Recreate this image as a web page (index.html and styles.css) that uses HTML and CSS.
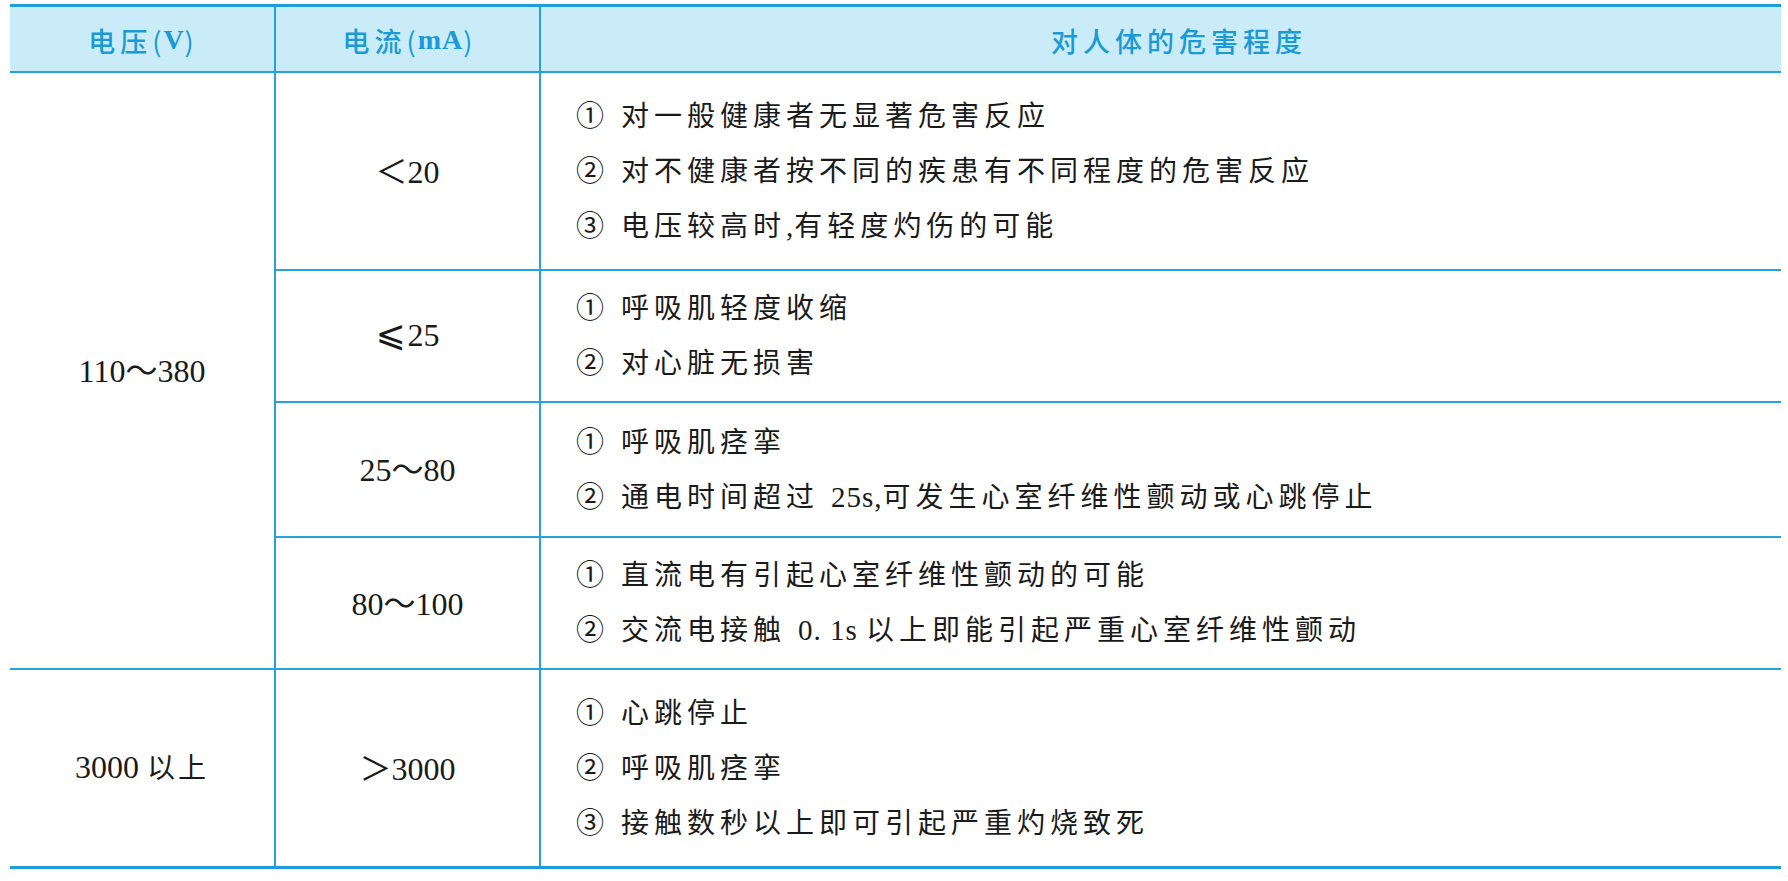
FILE: index.html
```html
<!DOCTYPE html>
<html lang="zh-CN">
<head>
<meta charset="utf-8">
<title>电流对人体的危害程度</title>
<link rel="stylesheet" href="styles.css">
</head>
<body>
<div class="sheet">
  <div class="grid">
    <div class="hd">电压<span class="paren">(</span><b class="lat">V</b><span class="paren">)</span></div>
    <div class="hd">电流<span class="paren">(</span><b class="lat">mA</b><span class="paren">)</span></div>
    <div class="hd">对人体的危害程度</div>

    <div class="cell num volt"><span>110～380</span></div>

    <div class="cell num"><span>＜20</span></div>
    <div class="cell desc">
      <p>① 对一般健康者无显著危害反应</p>
      <p>② 对不健康者按不同的疾患有不同程度的危害反应</p>
      <p>③ 电压较高时<span class="w">,</span>有轻度灼伤的可能</p>
    </div>

    <div class="cell num"><span><span class="le">⩽</span>25</span></div>
    <div class="cell desc">
      <p>① 呼吸肌轻度收缩</p>
      <p>② 对心脏无损害</p>
    </div>

    <div class="cell num"><span>25～80</span></div>
    <div class="cell desc">
      <p>① 呼吸肌痉挛</p>
      <p>② 通电时间超过 <span class="w">25s,</span>可发生心室纤维性颤动或心跳停止</p>
    </div>

    <div class="cell num"><span>80～100</span></div>
    <div class="cell desc">
      <p>① 直流电有引起心室纤维性颤动的可能</p>
      <p>② 交流电接触 <span class="w">0. 1s </span>以上即能引起严重心室纤维性颤动</p>
    </div>

    <div class="cell num"><span>3000 <span class="cjk">以上</span></span></div>
    <div class="cell num"><span>＞3000</span></div>
    <div class="cell desc">
      <p>① 心跳停止</p>
      <p>② 呼吸肌痉挛</p>
      <p>③ 接触数秒以上即可引起严重灼烧致死</p>
    </div>
  </div>
</div>
</body>
</html>
```

FILE: styles.css
```css
html, body {
  margin: 0;
  padding: 0;
  background: #ffffff;
}

.sheet {
  padding: 4px 0 0 10px;
}

.grid {
  width: 1771px;
  display: grid;
  grid-template-columns: 264px 263px 1fr;
  grid-template-rows: 64px 196px 130px 133px 130px 196px;
  gap: 2px;
  background: #27a2dc;
  border-top: 3px solid #1f9dd9;
  border-bottom: 3px solid #1f9dd9;
}

.hd {
  background: #c9ecf8;
  color: #1a9ad6;
  display: flex;
  align-items: center;
  justify-content: center;
  font-family: "Noto Sans CJK SC", sans-serif;
  font-size: 27px;
  font-weight: 500;
  letter-spacing: 5px;
  padding-top: 2px;
}

.hd:nth-child(2) {
  padding-left: 2px;
}

.hd:nth-child(3) {
  padding-left: 36px;
}

.paren {
  font-weight: 400;
  letter-spacing: 2px;
}

.lat {
  font-family: "Liberation Serif", serif;
  font-weight: 700;
  font-size: 28px;
  letter-spacing: 1px;
}

.cell {
  background: #ffffff;
  color: #1a1a1a;
}

.num {
  display: flex;
  align-items: center;
  justify-content: center;
  font-family: "Liberation Serif", "Noto Sans CJK SC", "DejaVu Serif", serif;
  font-size: 32px;
  padding-bottom: 5px;
}

.volt {
  grid-row: 2 / span 4;
}

.le {
  font-family: "DejaVu Serif", "DejaVu Sans", serif;
  font-size: 36px;
  margin-right: 2px;
}

.cjk {
  font-family: "Noto Sans CJK SC", sans-serif;
  font-size: 28px;
  letter-spacing: 3px;
}

.desc {
  display: flex;
  flex-direction: column;
  justify-content: center;
  padding-left: 35px;
  font-family: "Liberation Serif", "Noto Sans CJK SC", "DejaVu Serif", serif;
  font-size: 28px;
  letter-spacing: 5px;
}

.desc p {
  margin: 0;
  height: 55px;
  line-height: 55px;
  white-space: pre;
}

.w {
  letter-spacing: 1px;
  font-size: 29px;
}
```
